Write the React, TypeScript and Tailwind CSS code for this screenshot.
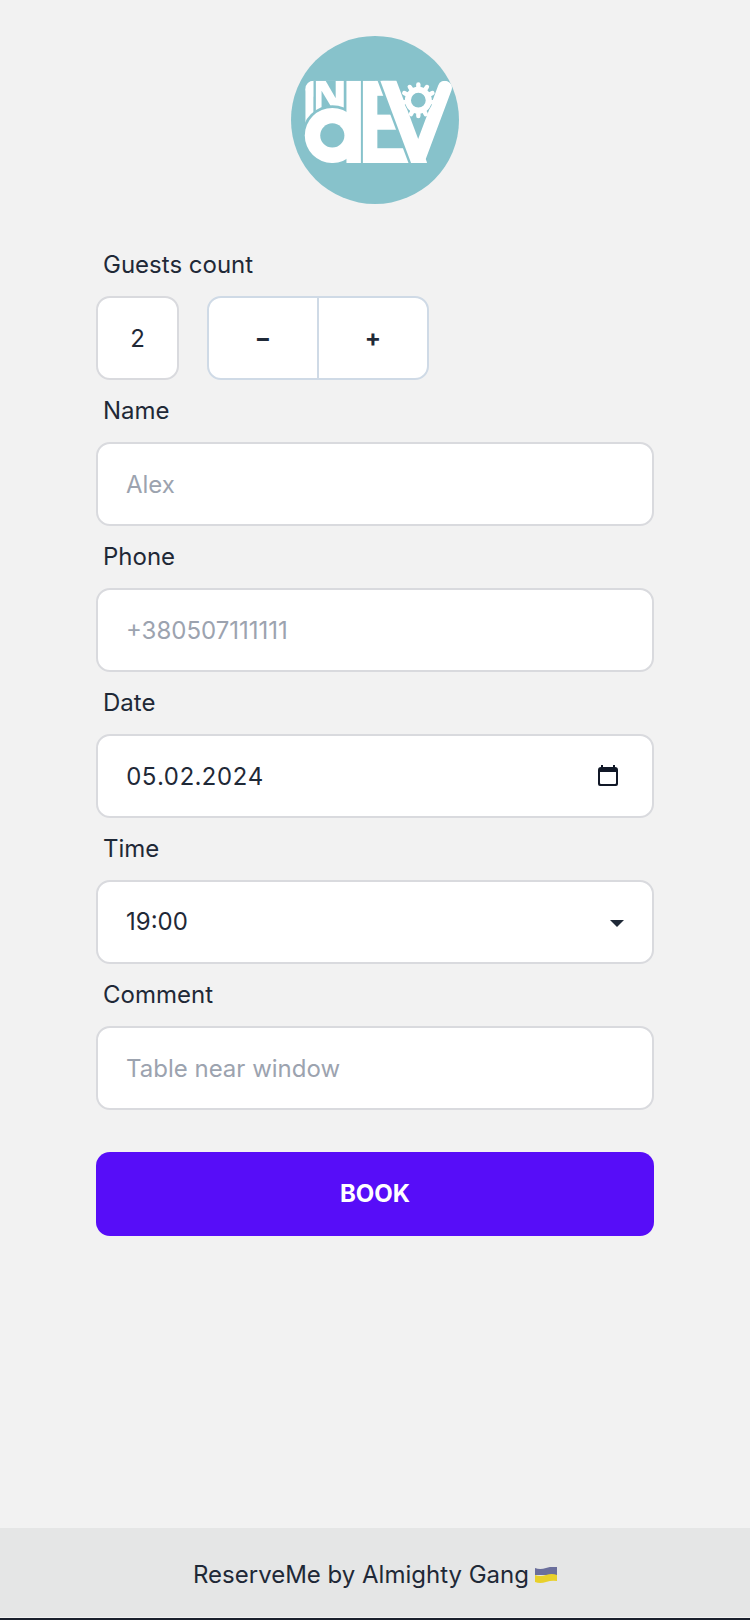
import { useState } from "react";
import type { ReactNode } from "react";

const fieldClass =
  "h-[84px] w-full rounded-[14px] border-2 border-[#d9dade] bg-white px-7 text-2xl text-[#1f2937] outline-none placeholder:text-[#9ca3af]";

const times = ["17:00", "18:00", "19:00", "20:00", "21:00"];

const gearTeeth = [0, 33, 63, 98, 152, 180, 208, 262, 297, 327];

function Logo() {
  return (
    <svg viewBox="0 0 500 500" className="size-[168px]" role="img" aria-label="INdEV">
      <defs>
        <clipPath id="band">
          <rect x="0" y="133" width="500" height="245" />
        </clipPath>
      </defs>
      <circle cx="250" cy="250" r="250" fill="#87c2cb" />
      <g clipPath="url(#band)" fill="#fff">
        <circle cx="67" cy="157" r="24" />
        <rect x="43" y="157" width="24" height="110" />
        <rect x="67" y="133" width="90" height="110" />
        <g fill="#87c2cb">
          <rect x="67" y="133" width="7" height="110" />
          <path d="M103 133h30v52z" />
          <path d="M91 163v60h36z" />
          <circle cx="123" cy="296" r="90" />
        </g>
        <circle cx="123" cy="296" r="82" />
        <rect x="165" y="133" width="43" height="245" />
        <circle cx="123" cy="296" r="36" fill="#87c2cb" />
        <rect x="214" y="133" width="43" height="245" />
        <rect x="250" y="133" width="40" height="45" />
        <rect x="250" y="234" width="80" height="45" />
        <rect x="250" y="334" width="110" height="44" />
      </g>
      <g clipPath="url(#band)" fill="none">
        <path d="M282 118l104 277" stroke="#87c2cb" strokeWidth="56" />
        <path d="M287 126l97 259" stroke="#fff" strokeWidth="45" />
        <path d="M458 154l-76 203" stroke="#fff" strokeWidth="42" strokeLinecap="round" />
        <rect x="362" y="345" width="22" height="33" fill="#fff" />
      </g>
      <circle cx="379" cy="191" r="42" fill="#87c2cb" />
      <g stroke="#fff" strokeWidth="13" strokeLinecap="round">
        {gearTeeth.map((angle) => (
          <path key={angle} d="M379 155v-11" transform={`rotate(${angle} 379 191)`} />
        ))}
      </g>
      <circle cx="379" cy="191" r="31" fill="none" stroke="#fff" strokeWidth="18" />
    </svg>
  );
}

function Field({ id, label, children }: { id: string; label: string; children: ReactNode }) {
  return (
    <div>
      <label htmlFor={id} className="flex h-[62px] items-center px-[7px] text-2xl">
        {label}
      </label>
      {children}
    </div>
  );
}

export default function App() {
  const [guests, setGuests] = useState(2);
  const [date, setDate] = useState("05.02.2024");
  const [time, setTime] = useState("19:00");

  return (
    <div className="flex min-h-screen flex-col bg-[#f2f2f2] font-['Inter',sans-serif] text-[#1f2937]">
      <main className="flex grow flex-col items-center px-24 pt-9">
        <Logo />

        <form className="mt-[30px] w-full" onSubmit={(e) => e.preventDefault()}>
          <Field id="guests" label="Guests count">
            <div className="flex gap-7">
              <input
                id="guests"
                readOnly
                value={guests}
                className="h-[84px] w-[83px] rounded-[14px] border-2 border-[#d9dade] bg-white text-center text-2xl outline-none"
              />
              <div className="flex h-[84px] w-[222px] divide-x-2 divide-[#cfdae6] overflow-hidden rounded-[14px] border-2 border-[#cfdae6] bg-white text-2xl font-bold">
                <button
                  type="button"
                  aria-label="Fewer guests"
                  className="flex-1"
                  onClick={() => setGuests(Math.max(1, guests - 1))}
                >
                  −
                </button>
                <button
                  type="button"
                  aria-label="More guests"
                  className="flex-1"
                  onClick={() => setGuests(guests + 1)}
                >
                  +
                </button>
              </div>
            </div>
          </Field>

          <Field id="name" label="Name">
            <input id="name" type="text" placeholder="Alex" className={fieldClass} />
          </Field>

          <Field id="phone" label="Phone">
            <input id="phone" type="tel" placeholder="+380507111111" className={fieldClass} />
          </Field>

          <Field id="date" label="Date">
            <div className="relative">
              <input
                id="date"
                type="text"
                inputMode="numeric"
                value={date}
                onChange={(e) => setDate(e.target.value)}
                className={`${fieldClass} tabular-nums`}
              />
              <button type="button" aria-label="Open calendar" className="absolute inset-y-0 right-9">
                <svg viewBox="0 0 20 22" className="h-[22px] w-5" fill="#111827">
                  <path d="M3 0h2v2h10V0h2v2a3 3 0 0 1 3 3v14a2 2 0 0 1-2 2H2a2 2 0 0 1-2-2V5a3 3 0 0 1 3-3zM2 7v11a1 1 0 0 0 1 1h14a1 1 0 0 0 1-1V7z" />
                </svg>
              </button>
            </div>
          </Field>

          <Field id="time" label="Time">
            <div className="relative">
              <select
                id="time"
                value={time}
                onChange={(e) => setTime(e.target.value)}
                className={`${fieldClass} appearance-none`}
              >
                {times.map((t) => (
                  <option key={t}>{t}</option>
                ))}
              </select>
              <svg
                viewBox="0 0 14 7"
                className="pointer-events-none absolute top-10 right-[30px] h-[7px] w-3.5"
                fill="#1f2937"
              >
                <path d="M0 0h14L7 7z" />
              </svg>
            </div>
          </Field>

          <Field id="comment" label="Comment">
            <input id="comment" type="text" placeholder="Table near window" className={fieldClass} />
          </Field>

          <button
            type="submit"
            className="mt-[42px] h-[84px] w-full rounded-[14px] bg-[#570df8] text-2xl font-bold text-white"
          >
            BOOK
          </button>
        </form>
      </main>

      <footer className="border-b-2 border-[#1a202c] bg-[#e5e6e6] text-2xl">
        <div className="flex h-[90px] items-center justify-center gap-1.5 border-b border-[#f2f2f2] pt-1">
          <span>ReserveMe by Almighty Gang</span>
          <svg viewBox="0 0 22 16" className="h-4 w-[22px]" role="img" aria-label="Flag of Ukraine">
            <path d="M0 1q5 2 11 0t11-1v8H0z" fill="#6b6f9c" />
            <path d="M0 8q5 2 11 0t11 0v6q-5-1-11 1t-11 0z" fill="#e8d02b" />
          </svg>
        </div>
      </footer>
    </div>
  );
}
